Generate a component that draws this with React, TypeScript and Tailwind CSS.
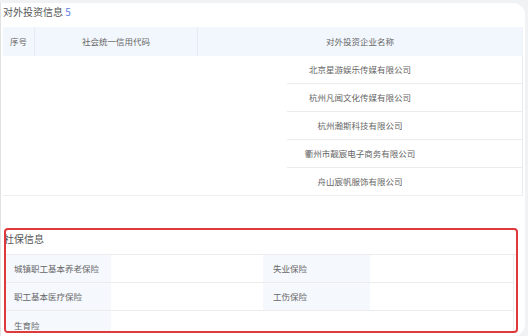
const companies = [
  "北京星游娱乐传媒有限公司",
  "杭州凡闻文化传媒有限公司",
  "杭州瀚斯科技有限公司",
  "衢州市靓宸电子商务有限公司",
  "舟山宸帆服饰有限公司",
];

const font = { fontFamily: '"Noto Sans CJK SC", "Noto Sans", sans-serif' };

function InsuranceRow({
  left,
  right,
  last,
}: {
  left: string;
  right?: string;
  last?: boolean;
}) {
  return (
    <div className={`flex ${last ? "h-[28px]" : "h-[28px] border-b border-[#ececec]"}`}>
      <div className="flex w-[105px] items-center bg-[#f5f8fd] pl-[8px]">{left}</div>
      <div className="w-[152px]" />
      <div className={`flex w-[107px] items-center pl-[10px] ${right ? "bg-[#f5f8fd]" : ""}`}>
        {right}
      </div>
      <div className="flex-1 border-r border-[#ececec]" />
    </div>
  );
}

export default function App() {
  return (
    <div className="h-[336px] w-[528px] overflow-hidden bg-[#f1f2f4]" style={font}>
      <div className="mt-[3px] h-[333px] w-[525px] rounded-r-[12px] border-l border-[#e2e2e2] bg-white">
        <div className="pl-[2px] pt-[1px] text-[10px] leading-[16px] text-[#555]">
          对外投资信息 <span className="text-[#5b7be0]">5</span>
        </div>

        <div className="ml-[2px] mt-[7px] w-[520px] text-[8.5px] text-[#666]">
          <div className="flex h-[29px] bg-[#f2f6fd]">
            <div className="flex w-[32px] items-center justify-center border-r border-[#e7ecf4]">序号</div>
            <div className="flex w-[163px] items-center justify-center border-r border-[#e7ecf4]">
              社会统一信用代码
            </div>
            <div className="flex flex-1 items-center justify-center border-r border-[#eef1f6]">
              对外投资企业名称
            </div>
          </div>
          <div className="flex border-b border-[#eeeeee]">
            <div className="w-[195px]" />
            <div className="flex-1 border-r border-[#ececec]">
              {companies.map((name, i) => (
                <div key={name}>
                  <div className="flex h-[27px] items-center justify-center">{name}</div>
                  {i < companies.length - 1 && <div className="ml-[89px] h-px bg-[#ededed]" />}
                </div>
              ))}
            </div>
          </div>
        </div>

        <div className="ml-[3px] mt-[32px] h-[105px] w-[514px] overflow-hidden rounded-[4px] border-2 border-[#e0393b]">
          <div className="-ml-[2px] h-[24px] pt-[1px] text-[10px] leading-[16px] text-[#555]">社保信息</div>
          <div className="border-t border-[#ececec] pr-[2px] text-[8.5px] text-[#666]">
            <InsuranceRow left="城镇职工基本养老保险" right="失业保险" />
            <InsuranceRow left="职工基本医疗保险" right="工伤保险" />
            <InsuranceRow left="生育险" last />
          </div>
        </div>
      </div>
    </div>
  );
}
